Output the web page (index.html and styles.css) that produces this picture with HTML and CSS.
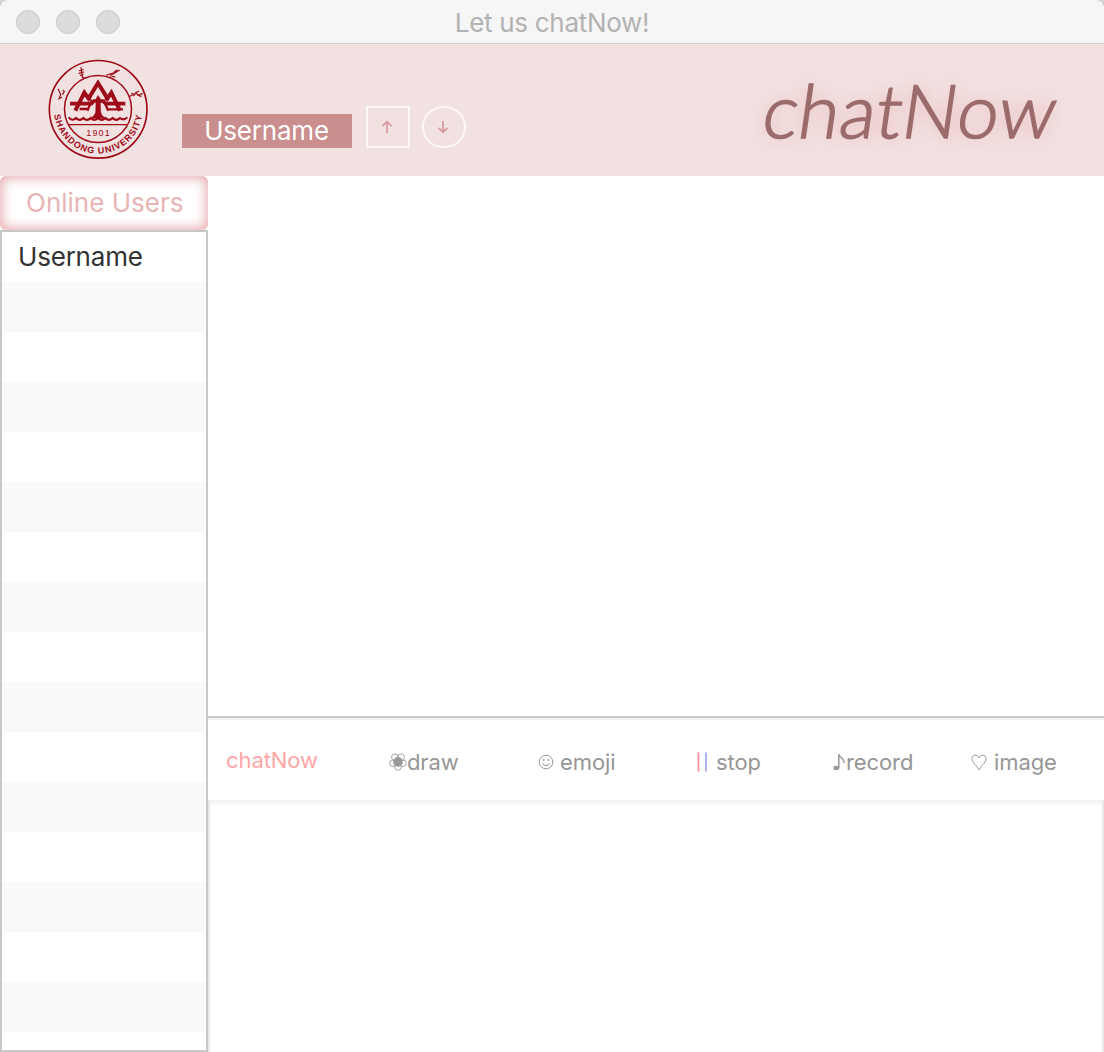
FILE: index.html
```html
<!DOCTYPE html>
<html lang="en">
<head>
<meta charset="utf-8">
<title>Let us chatNow!</title>
<link rel="stylesheet" href="styles.css">
</head>
<body>
<div class="window">
  <div class="titlebar">
    <div class="lights"><i></i><i></i><i></i></div>
    <div class="title">Let us chatNow!</div>
  </div>
  <header class="header">
    <svg class="seal" viewBox="0 0 360 360" fill="none" stroke="#9f0a18">
      <defs><path id="ring" d="M42.500 194 A133 133 0 0 0 306.500 194"/></defs>
      <circle cx="174.500" cy="178" r="146.500" stroke-width="5"/>
      <circle cx="174" cy="177" r="100.500" stroke-width="4.500"/>
      <path d="M86 224H262" stroke-width="4"/>
      <path d="M86 202q11 13 22 2q11 11 22 0q11 11 22 0q11 11 22 0q11 11 22 0q11 11 22 0q11 11 22 0q11 9 22-2" stroke-width="6"/>
      <path d="M144 148L174 99L204 148M106 182L133 128L150 152M198 152L214 128L240 182" stroke-width="12"/>
      <path d="M90 161H154L162 153H188L198 161H256" stroke-width="11"/>
      <path d="M119 177H146M206 178H249M142 182L156 150M190 150L205 182" stroke-width="7"/>
      <path d="M168 146L174 136L181 146L182 184Q183 196 196 205H152Q167 195 167 184Z" fill="#9f0a18"/>
      <g stroke-width="3.500" stroke-linecap="round">
        <path d="M55 118L62 134L57 146L65 142M69 121L73 125L68 133"/>
        <path d="M123 53L127 82M118 62L129 59M117 70L131 66M121 76L129 73M127 80L131 84"/>
        <path d="M200 75L217 70L211 78M218 73L238 61M222 67L231 60M216 79L225 81"/>
        <path d="M270 139L281 133L275 130M282 137L288 127L294 136L307 131M290 127L296 124M297 137L303 139"/>
      </g>
      <g class="seal-text">
        <text x="174" y="257" text-anchor="middle" font-size="27" textLength="70">1901</text>
        <text font-size="27" font-weight="bold" textLength="382"><textPath href="#ring">SHANDONG UNIVERSITY</textPath></text>
      </g>
    </svg>
    <div class="user">Username</div>
    <button class="step" aria-label="Up"><svg viewBox="0 0 12 14"><path d="M6 13V2M1.500 6.200L6 1.800L10.500 6.200"/></svg></button>
    <button class="step round" aria-label="Down"><svg viewBox="0 0 12 14"><path d="M6 1V12M1.500 7.800L6 12.200L10.500 7.800"/></svg></button>
    <div class="brand">chatNow</div>
  </header>
  <div class="main">
    <aside class="sidebar">
      <div class="online">Online Users</div>
      <div class="users"><div class="entry">Username</div></div>
    </aside>
    <section class="chat">
      <div class="messages"></div>
      <nav class="tools">
        <span class="tool name">chatNow</span>
        <span class="tool draw"><svg width="18" height="18" viewBox="0 0 18 18"><g fill="none" stroke="#a5a5a5"><circle cx="5.800" cy="4.200" r="3.300"/><circle cx="12.200" cy="4.200" r="3.300"/><circle cx="14.100" cy="10.300" r="3.300"/><circle cx="9" cy="13.900" r="3.300"/><circle cx="3.900" cy="10.300" r="3.300"/></g><circle cx="9" cy="8.900" r="4.800" fill="#999"/></svg><b>draw</b></span>
        <span class="tool emoji"><svg width="16" height="16" viewBox="0 0 16 16"><circle cx="8" cy="8" r="6.800" fill="none" stroke="#999"/><circle cx="5.600" cy="6" r="1" fill="#999"/><circle cx="10.400" cy="6" r="1" fill="#999"/><path d="M4 9.300Q8 14 12 9.300" fill="none" stroke="#999"/></svg><b>emoji</b></span>
        <span class="tool stop"><svg width="12" height="20" viewBox="0 0 12 20"><path d="M2.500 0.500V19.500" stroke="#ff8c96" stroke-width="1.700"/><path d="M10 0.500V19.500" stroke="#a1a4f0" stroke-width="1.700"/></svg><b>stop</b></span>
        <span class="tool record"><svg width="13" height="18" viewBox="0 0 13 18"><path d="M5.800 15V1C6 5 12 4.500 11 10" fill="none" stroke="#999" stroke-width="1.500"/><ellipse cx="3.400" cy="15" rx="3" ry="2.200" fill="#999"/></svg><b>record</b></span>
        <span class="tool image"><svg width="16" height="17" viewBox="0 0 16 17"><path d="M8 16C6.500 12 1 9 1 4.500C1 .5 6.500 0 8 4C9.500 0 15 .5 15 4.500C15 9 9.500 12 8 16Z" fill="none" stroke="#999"/></svg><b>image</b></span>
      </nav>
      <div class="input"></div>
    </section>
  </div>
</div>
</body>
</html>
```
FILE: styles.css
```css
* { box-sizing: border-box; }
body { margin: 0; background: #d4d4d4; font-family: Inter, "Liberation Sans", sans-serif; }
.window { width: 1104px; height: 1052px; display: flex; flex-direction: column; overflow: hidden; border-radius: 9px 9px 0 0; background: #fff; }
.titlebar { height: 44px; flex: none; display: grid; grid-template-columns: 1fr auto 1fr; align-items: center; background: #f6f6f6; border-bottom: 1px solid #d2cdcd; }
.lights { display: flex; gap: 16px; padding-left: 16px; }
.lights i { width: 24px; height: 24px; border-radius: 50%; background: #dcdcdc; border: 1px solid #c9c9c9; }
.title { font-size: 26px; line-height: 40px; letter-spacing: -0.3px; color: #b2b2b2; padding-top: 2px; }
.header { height: 132px; flex: none; display: flex; align-items: flex-start; padding-left: 40px; background: #f2e1e1; }
.seal { width: 120px; height: 120px; margin-top: 6px; flex: none; }
.seal-text { fill: #9f0a18; stroke: none; font-family: "Liberation Sans", sans-serif; }
.user { width: 170px; height: 34px; margin: 70px 0 0 22px; padding-right: 1px; background: #ca8e8e; color: #fff; font-size: 26px; line-height: 34px; letter-spacing: -0.2px; text-align: center; }
.step { width: 44px; height: 42px; margin: 62px 0 0 14px; padding: 0 2px 0 0; display: grid; place-items: center; background: transparent; border: 2px solid #fdf8f8; }
.step svg { width: 12px; height: 14px; fill: none; stroke: #d59a9b; stroke-width: 1.7; }
.round { margin-left: 12px; border-radius: 22px; }
.brand { margin: 18px 47px 0 auto; font: 300 74px/95px Lato, sans-serif; letter-spacing: 0.7px; color: #9c6b6b; -webkit-text-stroke: 1.6px #9c6b6b; text-shadow: 0 0 18px #e6a3a7; transform: skewX(-8.2deg); }
.main { flex: 1; display: flex; min-height: 0; }
.sidebar { width: 208px; display: flex; flex-direction: column; }
.online { height: 54px; padding-left: 26px; font-size: 26px; line-height: 54px; color: #e8b4b6; border-radius: 6px; box-shadow: inset 0 0 13px 1px #e3a1a4; }
.users { flex: 1; border: 2px solid #c8c8c8; background: repeating-linear-gradient(#fff 0 50px, #f9f9f9 50px 100px); }
.entry { height: 50px; padding-left: 16px; font-size: 26px; line-height: 50px; letter-spacing: -0.2px; color: #323232; }
.chat { flex: 1; display: flex; flex-direction: column; }
.messages { height: 542px; border-bottom: 2px solid #c8c8c8; }
.tools { position: relative; height: 82px; display: flex; align-items: flex-start; border-top: 2px solid #f1f1f1; padding: 26px 0 0 18px; font-size: 22px; line-height: 32px; letter-spacing: -0.1px; color: #969696; }
.tool { display: flex; align-items: center; flex: none; }
.tool b { font-weight: 400; }
.name { width: 163px; color: #ffa5a5; margin-top: -2px; }
.draw { width: 149px; }
.emoji { width: 158px; gap: 6px; }
.stop { width: 137px; gap: 8px; }
.record { width: 138px; }
.image { gap: 7px; }
.input { flex: 1; border: solid #e8e8e8; border-width: 0 2px; background: linear-gradient(#f0f0f0, #fff 6px); }
```
